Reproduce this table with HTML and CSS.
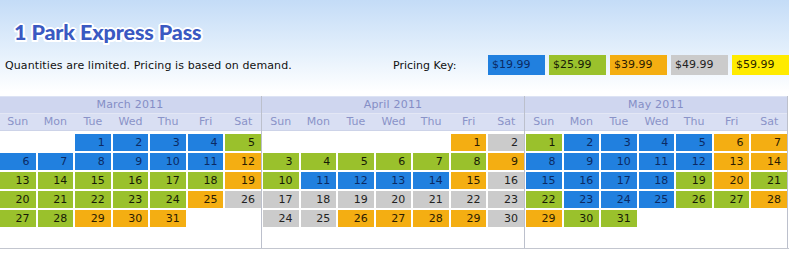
FILE: index.html
```html
<!DOCTYPE html>
<html>
<head>
<meta charset="utf-8">
<link rel="stylesheet" href="styles.css">
</head>
<body>
<header class="top">
  <h1 class="title">1 Park Express Pass</h1>
  <div class="info">
    <p class="note">Quantities are limited. Pricing is based on demand.</p>
    <div class="key">
      <span class="key-label">Pricing Key:</span>
      <span class="swatch p1">$19.99</span>
      <span class="swatch p2">$25.99</span>
      <span class="swatch p3">$39.99</span>
      <span class="swatch p4">$49.99</span>
      <span class="swatch p5">$59.99</span>
    </div>
  </div>
</header>
<main class="cal">
  <section class="month">
    <div class="m-title">March 2011</div>
    <div class="dnames"><span>Sun</span><span>Mon</span><span>Tue</span><span>Wed</span><span>Thu</span><span>Fri</span><span>Sat</span></div>
    <div class="days">
      <i></i><i></i><b class="p1">1</b><b class="p1">2</b><b class="p1">3</b><b class="p1">4</b><b class="p2">5</b>
      <b class="p1">6</b><b class="p1">7</b><b class="p1">8</b><b class="p1">9</b><b class="p1">10</b><b class="p1">11</b><b class="p3">12</b>
      <b class="p2">13</b><b class="p2">14</b><b class="p2">15</b><b class="p2">16</b><b class="p2">17</b><b class="p2">18</b><b class="p3">19</b>
      <b class="p2">20</b><b class="p2">21</b><b class="p2">22</b><b class="p2">23</b><b class="p2">24</b><b class="p3">25</b><b class="p4">26</b>
      <b class="p2">27</b><b class="p2">28</b><b class="p3">29</b><b class="p3">30</b><b class="p3">31</b><i></i><i></i>
      <i></i><i></i><i></i><i></i><i></i><i></i><i></i>
    </div>
  </section>
  <section class="month">
    <div class="m-title">April 2011</div>
    <div class="dnames"><span>Sun</span><span>Mon</span><span>Tue</span><span>Wed</span><span>Thu</span><span>Fri</span><span>Sat</span></div>
    <div class="days">
      <i></i><i></i><i></i><i></i><i></i><b class="p3">1</b><b class="p4">2</b>
      <b class="p2">3</b><b class="p2">4</b><b class="p2">5</b><b class="p2">6</b><b class="p2">7</b><b class="p2">8</b><b class="p3">9</b>
      <b class="p2">10</b><b class="p1">11</b><b class="p1">12</b><b class="p1">13</b><b class="p1">14</b><b class="p3">15</b><b class="p4">16</b>
      <b class="p4">17</b><b class="p4">18</b><b class="p4">19</b><b class="p4">20</b><b class="p4">21</b><b class="p4">22</b><b class="p4">23</b>
      <b class="p4">24</b><b class="p4">25</b><b class="p3">26</b><b class="p3">27</b><b class="p3">28</b><b class="p3">29</b><b class="p4">30</b>
      <i></i><i></i><i></i><i></i><i></i><i></i><i></i>
    </div>
  </section>
  <section class="month">
    <div class="m-title">May 2011</div>
    <div class="dnames"><span>Sun</span><span>Mon</span><span>Tue</span><span>Wed</span><span>Thu</span><span>Fri</span><span>Sat</span></div>
    <div class="days">
      <b class="p2">1</b><b class="p1">2</b><b class="p1">3</b><b class="p1">4</b><b class="p1">5</b><b class="p3">6</b><b class="p3">7</b>
      <b class="p1">8</b><b class="p1">9</b><b class="p1">10</b><b class="p1">11</b><b class="p1">12</b><b class="p3">13</b><b class="p3">14</b>
      <b class="p1">15</b><b class="p1">16</b><b class="p1">17</b><b class="p1">18</b><b class="p2">19</b><b class="p3">20</b><b class="p2">21</b>
      <b class="p2">22</b><b class="p1">23</b><b class="p1">24</b><b class="p1">25</b><b class="p2">26</b><b class="p2">27</b><b class="p3">28</b>
      <b class="p3">29</b><b class="p2">30</b><b class="p2">31</b><i></i><i></i><i></i><i></i>
      <i></i><i></i><i></i><i></i><i></i><i></i><i></i>
    </div>
  </section>
</main>
</body>
</html>
```

FILE: styles.css
```css
* { box-sizing: border-box; }
html, body { margin: 0; padding: 0; }
body {
  width: 789px;
  height: 255px;
  overflow: hidden;
  background: linear-gradient(to bottom, #c4dcf7 0px, #e6f1fc 55px, #ffffff 92px, #ffffff 100%);
  font-family: "DejaVu Sans", Verdana, sans-serif;
  color: #111;
}
.top {
  height: 96px;
  padding-top: 19px;
}
.title {
  margin: 0 0 0 14px;
  height: 26px;
  font-family: Lato, "Open Sans", sans-serif;
  font-weight: 900;
  font-size: 21.5px;
  line-height: 26px;
  letter-spacing: -0.1px;
  color: #3a59c2;
  text-shadow: 2px 0 0 #fff, -2px 0 0 #fff, 0 2px 0 #fff, 0 -2px 0 #fff,
    1.5px 1.5px 0 #fff, -1.5px -1.5px 0 #fff, 1.5px -1.5px 0 #fff, -1.5px 1.5px 0 #fff;
}
.info {
  display: flex;
  align-items: center;
  margin-top: 10px;
  height: 20px;
}
.note {
  margin: 0 0 0 5px;
  width: 389px;
  font-size: 11px;
  letter-spacing: 0.1px;
  color: #111;
}
.key {
  display: flex;
  align-items: center;
  gap: 4px;
}
.key-label {
  width: 91px;
  font-size: 11px;
  color: #111;
}
.swatch {
  width: 57px;
  height: 20px;
  line-height: 20px;
  padding-left: 4px;
  font-size: 11px;
}
.p1 { background: #2180df; color: #0b2a63; }
.p2 { background: #9ac12c; color: #161a06; }
.p3 { background: #f4ae12; color: #2a1c02; }
.p4 { background: #cbcbcb; color: #222; }
.p5 { background: #ffeb00; color: #2a2500; }

.cal {
  display: flex;
  margin-left: -1px;
  border-bottom: 1px solid #c3c6cf;
}
.month {
  width: 263px;
  padding-bottom: 1px;
  border-right: 1px solid #bcc0cc;
}
.m-title {
  height: 18px;
  border-top: 1px solid #dde3f4;
  border-bottom: 1px solid #e3e7f5;
  background: #cfd6ef;
  color: #858ec6;
  font-size: 11px;
  line-height: 16px;
  text-align: center;
  letter-spacing: 0.2px;
}
.dnames {
  display: grid;
  grid-template-columns: repeat(7, 1fr);
  gap: 2px;
  height: 17px;
  padding-left: 1px;
  background: #d9dff3;
  border-bottom: 1px solid #cdd3e8;
  color: #8a93c8;
  font-size: 11px;
  line-height: 16px;
  text-align: center;
}
.days {
  display: grid;
  grid-template-columns: repeat(7, 1fr);
  grid-auto-rows: 17px;
  gap: 2px;
  padding: 3px 0 1px 1px;
}
.days b, .days i {
  display: block;
  font-style: normal;
  font-weight: normal;
  font-size: 11px;
  line-height: 17px;
  text-align: right;
  padding-right: 6px;
}
```
